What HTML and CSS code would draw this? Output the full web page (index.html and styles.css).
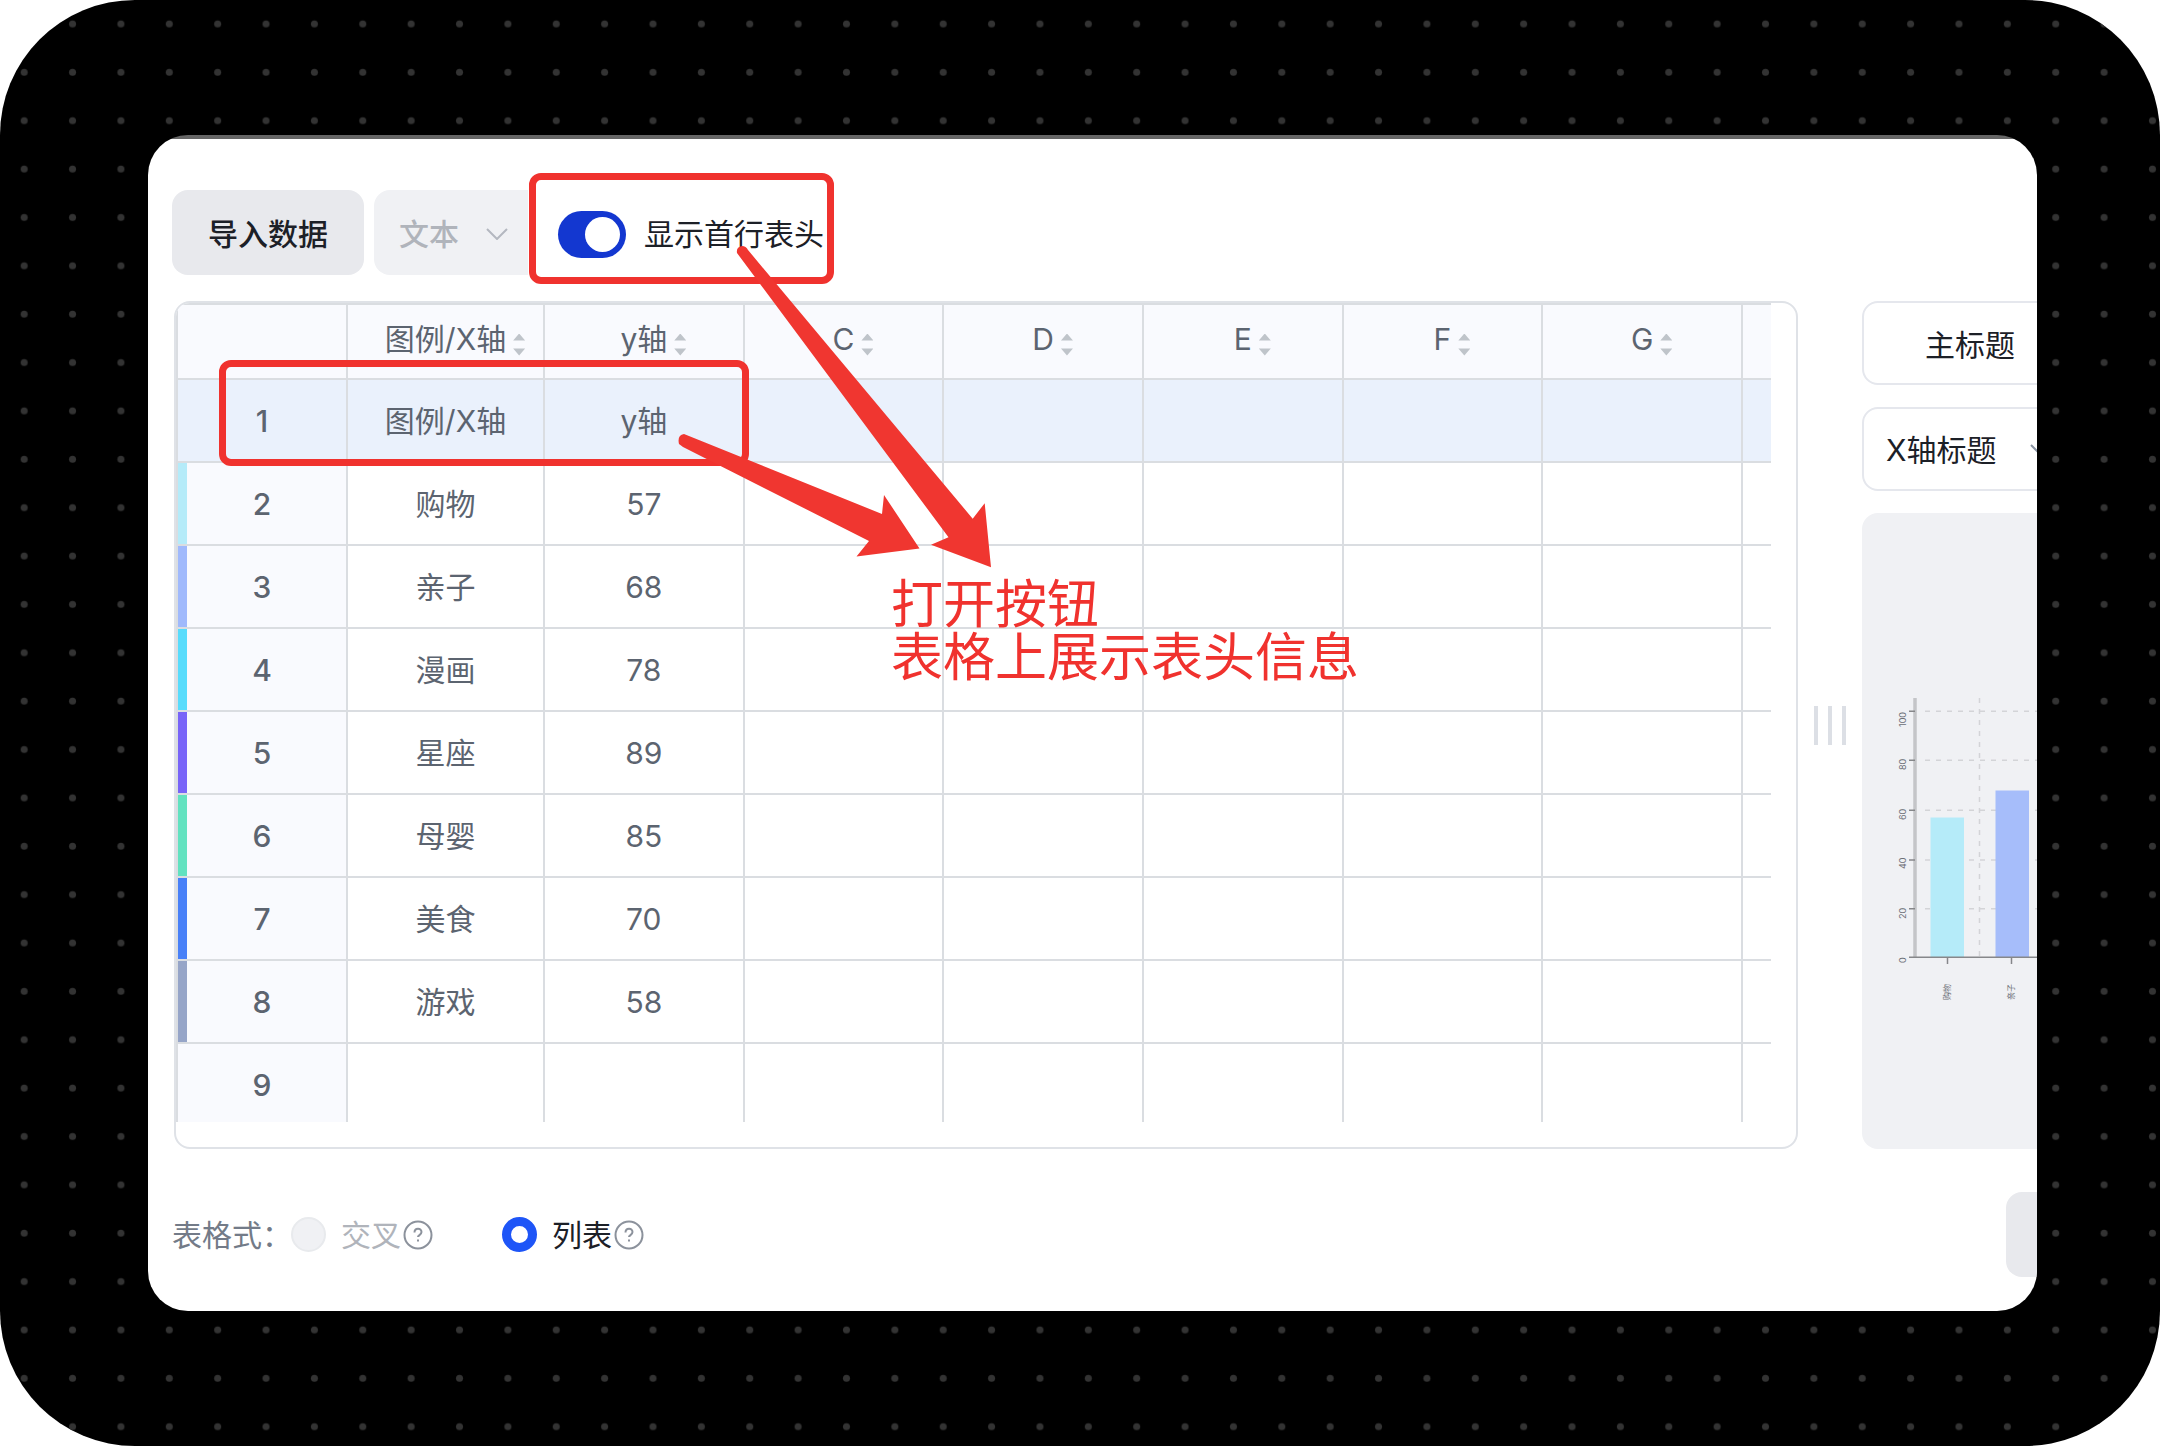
FILE: index.html
```html
<!DOCTYPE html>
<html lang="zh-CN">

<head>
    <meta charset="UTF-8">
    <meta name="viewport" content="width=device-width, initial-scale=1.0">
    <title>图表数据</title>
    <link rel="stylesheet" href="styles.css">
</head>

<body>
    <div class="stage">
        <svg class="dots" width="100%" height="100%" aria-hidden="true">
            <defs>
                <pattern id="dot" width="48.37" height="48.37" patternUnits="userSpaceOnUse">
                    <circle cx="24.2" cy="24" r="3.5" fill="#333" />
                </pattern>
            </defs>
            <rect width="100%" height="100%" fill="url(#dot)" />
        </svg>

        <main class="panel">
            <div class="toolbar">
                <button class="btn" type="button">导入数据</button>
                <div class="select">
                    <select disabled aria-label="数据类型">
                        <option>文本</option>
                    </select>
                    <svg class="arrow" viewBox="0 0 22 12"><path d="M1 1l10 10L21 1" /></svg>
                </div>
                <label class="switch">
                    <input type="checkbox" checked>
                    <span>显示首行表头</span>
                </label>
            </div>

            <div class="content">
                <div class="sheet">
                    <div class="scroll">
                        <table>
                            <colgroup>
                                <col class="col-num">
                                <col class="col-name">
                                <col><col><col><col><col><col>
                                <col class="col-rest">
                            </colgroup>
                            <thead>
                                <tr>
                                    <th></th>
                                    <th>图例/X轴<i class="sort"></i></th>
                                    <th>y轴<i class="sort"></i></th>
                                    <th>C<i class="sort"></i></th>
                                    <th>D<i class="sort"></i></th>
                                    <th>E<i class="sort"></i></th>
                                    <th>F<i class="sort"></i></th>
                                    <th>G<i class="sort"></i></th>
                                    <th></th>
                                </tr>
                            </thead>
                            <tbody>
                                <tr class="first"><th>1</th><td>图例/X轴</td><td>y轴</td><td></td><td></td><td></td><td></td><td></td><td></td></tr>
                                <tr class="c1"><th>2</th><td>购物</td><td>57</td><td></td><td></td><td></td><td></td><td></td><td></td></tr>
                                <tr class="c2"><th>3</th><td>亲子</td><td>68</td><td></td><td></td><td></td><td></td><td></td><td></td></tr>
                                <tr class="c3"><th>4</th><td>漫画</td><td>78</td><td></td><td></td><td></td><td></td><td></td><td></td></tr>
                                <tr class="c4"><th>5</th><td>星座</td><td>89</td><td></td><td></td><td></td><td></td><td></td><td></td></tr>
                                <tr class="c5"><th>6</th><td>母婴</td><td>85</td><td></td><td></td><td></td><td></td><td></td><td></td></tr>
                                <tr class="c6"><th>7</th><td>美食</td><td>70</td><td></td><td></td><td></td><td></td><td></td><td></td></tr>
                                <tr class="c7"><th>8</th><td>游戏</td><td>58</td><td></td><td></td><td></td><td></td><td></td><td></td></tr>
                                <tr><th>9</th><td></td><td></td><td></td><td></td><td></td><td></td><td></td><td></td></tr>
                            </tbody>
                        </table>
                    </div>
                </div>

                <div class="drag"><i></i><i></i><i></i></div>

                <div class="side">
                    <button class="title" type="button">主标题</button>
                    <button class="title axis" type="button">X轴标题
                        <svg class="arrow" viewBox="0 0 22 12"><path d="M1 1l10 10L21 1" /></svg>
                    </button>
                    <div class="preview">
                        <svg class="chart" width="176" height="320" viewBox="1862 690 176 320">
                            <g stroke="#d3d4d7" stroke-width="1.5" stroke-dasharray="5 6">
                                <path d="M1925 711.3h112M1925 760.3h112M1925 810.3h112M1925 860h112M1925 908.7h112" />
                                <path d="M1979.5 698v259" />
                            </g>
                            <rect x="1930.5" y="817.5" width="33.5" height="140" fill="#b5ebf9" />
                            <rect x="1995.5" y="790.5" width="33.5" height="167" fill="#a6bdfa" />
                            <path d="M1915 698v259" stroke="#c4c5c8" stroke-width="3.5" />
                            <path d="M1909 711.3h6M1909 760.3h6M1909 810.3h6M1909 860h6M1909 908.7h6M1909 957.3h129M1947.5 957v7M2011.5 957v7" stroke="#86878a" stroke-width="1.5" />
                            <g class="nums">
                                <text transform="translate(1906 727) rotate(-90)">100</text>
                                <text transform="translate(1906 770) rotate(-90)">80</text>
                                <text transform="translate(1906 820) rotate(-90)">60</text>
                                <text transform="translate(1906 869) rotate(-90)">40</text>
                                <text transform="translate(1906 919) rotate(-90)">20</text>
                                <text transform="translate(1906 963) rotate(-90)">0</text>
                            </g>
                            <g class="names">
                                <text transform="translate(1950 1000) rotate(-90)">购物</text>
                                <text transform="translate(2014 1000) rotate(-90)">亲子</text>
                            </g>
                        </svg>
                    </div>
                </div>
            </div>

            <div class="footer">
                <span class="caption">表格式：</span>
                <label class="radio off"><input type="radio" name="mode" disabled><span>交叉</span></label>
                <svg class="help" viewBox="0 0 30 30"><circle cx="15" cy="15" r="13.5" /><path d="M11.500 12.500c0-5 7-5 7-.5 0 3-3.500 3-3.500 5M15 19.500v2" /></svg>
                <label class="radio on"><input type="radio" name="mode" checked><span>列表</span></label>
                <svg class="help" viewBox="0 0 30 30"><circle cx="15" cy="15" r="13.5" /><path d="M11.500 12.500c0-5 7-5 7-.5 0 3-3.500 3-3.500 5M15 19.500v2" /></svg>
                <button class="btn cancel" type="button" aria-label="取消"></button>
            </div>
        </main>

        <!-- 标注 -->
        <div class="mark mark-switch"></div>
        <div class="mark mark-row"></div>
        <svg class="arrows" width="320" height="330" viewBox="675 240 320 330" aria-hidden="true">
            <path d="M737 253q-1-6 5-7 4 0 6 4L972.700 518.700l12-15.500 6.300 64-60-22.500 17.500-7.500z" />
            <path d="M679 444q-2-9 5-10l198 80 2-19 35.500 53.500-63 8 12.500-15.500L683 447z" />
        </svg>
        <p class="note">打开按钮<br>表格上展示表头信息</p>
    </div>
</body>

</html>
```
FILE: styles.css
```css
* {
    margin: 0;
    padding: 0;
    box-sizing: border-box;
}

body {
    background-color: #fff;
    font-family: Inter, "Noto Sans CJK SC", sans-serif;
    font-size: 30px;
    line-height: 40px;
    color: #1c2027;
}

button,
select {
    border: none;
    font: inherit;
    color: inherit;
}

.stage {
    position: relative;
    min-height: 100vh;
    padding: 135px 123px 135px 148px;
    border-radius: 135px;
    background-color: #000;
    overflow: hidden;
}

.dots {
    position: absolute;
    top: 0;
    left: 0;
}

.panel {
    position: relative;
    height: 1176px;
    padding: 55px 0 34px 24px;
    border-radius: 40px;
    background: linear-gradient(#666 4px, #fff 4px);
    overflow: hidden;
    display: flex;
    flex-direction: column;
}

.toolbar {
    display: flex;
    align-items: center;
    height: 85px;
}

.btn {
    height: 85px;
    padding: 2px 36px 0;
    border-radius: 16px;
    background-color: #e8e9ed;
    font-weight: 500;
    white-space: nowrap;
}

.arrow {
    width: 22px;
    height: 12px;
    fill: none;
    stroke: #b4b8c0;
    stroke-width: 2;
}

.select {
    display: flex;
    align-items: center;
    width: 154px;
    height: 85px;
    margin-left: 10px;
    padding: 2px 20px 0 25px;
    border-radius: 16px 0 0 16px;
    background-color: #f0f1f4;
}

.select select {
    flex: 1;
    appearance: none;
    background: none;
    color: #b0b4bb;
    opacity: 1;
    font-weight: 500;
}

.switch {
    display: flex;
    align-items: center;
    gap: 18px;
    margin-left: 30px;
    padding-top: 3px;
}

.switch input {
    appearance: none;
    width: 68px;
    height: 47px;
    padding: 6px;
    border-radius: 24px;
    background-color: #1337d0;
    display: flex;
    justify-content: flex-end;
}

.switch input::before {
    content: "";
    width: 35px;
    height: 35px;
    border-radius: 50%;
    background-color: #fff;
}

.content {
    flex: 1;
    min-height: 0;
    display: flex;
    margin-top: 26px;
    margin-bottom: 43px;
}

.sheet {
    flex: 1;
    margin-left: 2px;
    padding: 0 25px 25px 0;
    border: 2px solid #dfe2e7;
    border-radius: 16px;
    overflow: hidden;
}

.scroll {
    height: 100%;
    overflow: hidden;
}

table {
    width: 100%;
    table-layout: fixed;
    border-collapse: separate;
    border-spacing: 0;
    border-top: 2px solid #dadde1;
    border-left: 2px solid #dadde1;
    color: #5c6470;
}

.col-num {
    width: 170px;
}

.col-name {
    width: 197px;
}

.col-rest {
    width: 28px;
}

th,
td {
    height: 83px;
    border-right: 2px solid #dadde1;
    border-bottom: 2px solid #dadde1;
    text-align: center;
    font-weight: 400;
    white-space: nowrap;
}

th {
    background-color: #f9fafe;
    font-weight: 500;
}

th:last-child,
td:last-child {
    border-right: none;
}

thead th {
    height: 75px;
    padding-bottom: 6px;
    font-weight: 400;
}

/* 排序图标不参与表头文字的居中 */
.sort {
    display: inline-block;
    width: 12px;
    height: 22px;
    margin-left: 7px;
    margin-right: -19px;
    vertical-align: -6px;
    background-color: #bfc4ca;
    clip-path: polygon(50% 0, 100% 32%, 0 32%, 0 68%, 100% 68%, 50% 100%, 0 68%, 0 32%);
}

.first th,
.first td {
    background-color: #eaf1fc;
}

.c1 th {
    box-shadow: inset 9px 0 #b5ebf9;
}

.c2 th {
    box-shadow: inset 9px 0 #a0b9fc;
}

.c3 th {
    box-shadow: inset 9px 0 #58dcfc;
}

.c4 th {
    box-shadow: inset 9px 0 #7864f8;
}

.c5 th {
    box-shadow: inset 9px 0 #62e2c0;
}

.c6 th {
    box-shadow: inset 9px 0 #4880f8;
}

.c7 th {
    box-shadow: inset 9px 0 #96a5c8;
}

.drag {
    display: flex;
    align-items: center;
    justify-content: center;
    gap: 10px;
    width: 64px;
}

.drag i {
    width: 4px;
    height: 39px;
    background-color: #dcdfe5;
}

/* 右侧超出面板的部分被裁掉 */
.side {
    display: flex;
    flex-direction: column;
    gap: 22px;
    width: 400px;
    margin-right: -225px;
}

.title {
    width: 216px;
    height: 84px;
    padding-top: 3px;
    border: 2px solid #e5e7ed;
    border-radius: 16px;
    background-color: #fff;
}

.axis {
    display: flex;
    align-items: center;
    justify-content: space-between;
    padding: 2px 24px 0 22px;
}

.axis .arrow {
    stroke: #8b95a3;
}

.preview {
    flex: 1;
    padding-top: 177px;
    border-radius: 16px;
    background-color: #f0f1f4;
}

.chart {
    display: block;
}

.nums,
.names {
    font-size: 9px;
    fill: #6c6f77;
}

.names {
    font-size: 8px;
}

.footer {
    display: flex;
    align-items: center;
    height: 85px;
}

.caption {
    width: 119px;
    color: #737b88;
    white-space: nowrap;
}

.radio {
    display: flex;
    align-items: center;
    gap: 15px;
}

.radio input {
    appearance: none;
    width: 35px;
    height: 35px;
    border: 2px solid #e8eaed;
    border-radius: 50%;
    background-color: #f0f1f4;
}

.radio.off {
    color: #b0b4bb;
}

.radio.on {
    margin-left: 69px;
}

.radio.on input {
    border: 9px solid #1e55f7;
    background-color: #fff;
}

.help {
    width: 30px;
    height: 30px;
    margin-left: 2px;
    fill: none;
    stroke: #8c929c;
    stroke-width: 2;
}

.cancel {
    width: 130px;
    margin-left: auto;
    margin-right: -99px;
}

.mark {
    position: absolute;
    border: 7px solid #f0322e;
    border-radius: 12px;
}

.mark-switch {
    top: 173px;
    left: 529px;
    width: 305px;
    height: 111px;
}

.mark-row {
    top: 360px;
    left: 219px;
    width: 530px;
    height: 106px;
}

.arrows {
    position: absolute;
    top: 240px;
    left: 675px;
    fill: #f03630;
}

.note {
    position: absolute;
    top: 578px;
    left: 891px;
    font-size: 52px;
    line-height: 53px;
    color: #f0322e;
}
```
